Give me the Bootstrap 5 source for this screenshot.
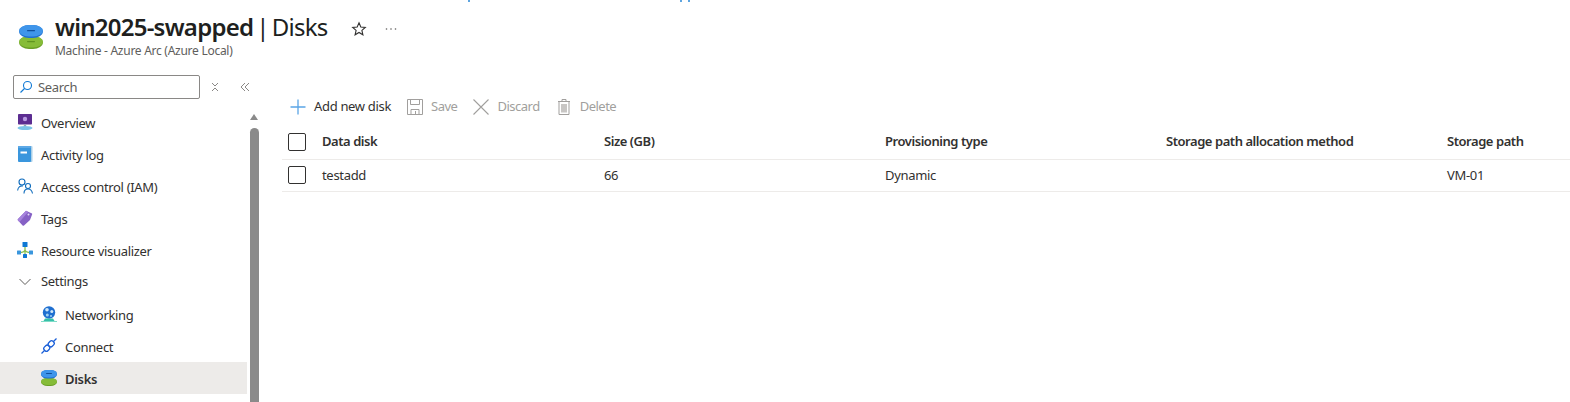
<!DOCTYPE html>
<html lang="en">

<head>
  <meta charset="UTF-8" />
  <meta name="viewport" content="width=device-width, initial-scale=1">
  <title>win2025-swapped | Disks</title>

  <link href="https://cdn.jsdelivr.net/npm/bootstrap@5.3.3/dist/css/bootstrap.min.css" rel="stylesheet" />
  <style>
    html, body { height: 402px; overflow: hidden; }
    body { font-family: "Noto Sans", "Liberation Sans", sans-serif; font-size: 13px; color: #323130; background: #fff; letter-spacing: -.32px; }

    .ticks { height: 2px; padding-left: 468px; }
    .ticks span { width: 2px; height: 2px; background: #5ea5e0; }
    .ticks span:nth-child(2) { margin-left: 210px; }
    .ticks span:nth-child(3) { margin-left: 6px; }

    .blade-head { height: 70px; padding: 9px 0 0 19px; }
    .blade-icon { width: 24px; height: 24px; margin: 14px 12px 0 0; flex: none; }
    .blade-title { font-size: 24px; line-height: 32px; color: #201f1e; letter-spacing: -.75px; word-spacing: -2.5px; }
    .blade-title b { font-weight: 600; }
    .blade-sub { font-size: 12px; line-height: 16px; color: #605e5c; letter-spacing: -.27px; word-spacing: 0; }
    .head-action { margin: 10px 0 0 23px; width: 16px; height: 16px; }
    .head-action + .head-action { margin-left: 16px; }

    .blade-side { width: 247px; flex: none; }
    .search-row { height: 32px; padding-left: 13px; margin-top: 3px; margin-bottom: -1px; }
    .search-box { width: 187px; height: 24px; flex: none; border: 1px solid #8a8886; border-radius: 2px; padding-left: 5px; color: #605e5c; gap: 5px; }
    .search-box span { padding-top: 2px; }
    .side-tool { width: 12px; height: 12px; margin: 6px 0 0 9px; flex: none; }
    .side-tool + .side-tool { margin-left: 18px; }

    .side-item { height: 32px; padding-left: 17px; gap: 8px; color: #323130; }
    .side-item svg { width: 16px; height: 16px; flex: none; }
    .side-item span { padding-top: 4px; }
    .side-item .side-group { padding-top: 0; }
    .side-sub { padding-left: 41px; }
    .side-on { background: #edebe9; font-weight: 600; }

    .side-scroll { width: 13px; margin-top: 42px; flex: none; padding-left: 3px; }
    .scroll-up { width: 0; height: 0; margin-bottom: 8px; border-left: 4.5px solid transparent; border-right: 4.5px solid transparent; border-bottom: 6px solid #8a8a8a; }
    .scroll-thumb { width: 9px; flex: 1; background: #8a8a8a; border-radius: 5px 5px 0 0; }

    .blade-main { padding-left: 22px; min-width: 0; flex: 1; }
    .cmd-bar { height: 36px; padding-left: 8px; margin-top: 17px; }
    .cmd-btn { gap: 8px; margin-right: 16px; color: #a19f9d; letter-spacing: -.5px; }
    .cmd-btn svg { width: 16px; height: 16px; }
    .cmd-live { color: #323130; letter-spacing: -.32px; }

    .disk-table { table-layout: fixed; width: 1288px; margin: 0; color: #323130; }
    .disk-table th, .disk-table td { padding: 0; height: 32px; border-bottom: 1px solid #edebe9; vertical-align: middle; font-size: 13px; color: #323130; background: transparent; }
    .disk-table th { font-weight: 600; height: 34px; letter-spacing: -.45px; }
    .disk-table td:not(:first-child) { padding-top: 1px; }
    .row-check { display: block; width: 18px; height: 18px; border: 1px solid #323130; border-radius: 2px; margin-left: 6px; }
  </style>
</head>

<body>
  <div class="ticks d-flex"><span></span><span></span><span></span></div>

  <div class="blade-head d-flex">
    <svg class="blade-icon" viewBox="0 0 24 24">
      <rect x="0" y="11" width="24" height="13" rx="10" ry="6.500" fill="#6a9f26"/>
      <rect x="0" y="11" width="24" height="11.500" rx="10" ry="5.700" fill="#86bc38"/>
      <rect x="8" y="16" width="8" height="1.200" rx=".6" fill="#5f9420"/>
      <rect x="0" y="0" width="24" height="13" rx="10" ry="6.500" fill="#1f6fd0"/>
      <rect x="0" y="0" width="24" height="11.500" rx="10" ry="5.700" fill="#3f95ea"/>
      <rect x="8" y="5" width="8" height="1.300" rx=".6" fill="#0f4f9c"/>
    </svg>
    <div>
      <div class="blade-title"><b>win2025-swapped</b> | Disks</div>
      <div class="blade-sub">Machine - Azure Arc (Azure Local)</div>
    </div>
    <svg class="head-action" viewBox="0 0 16 16" fill="none" stroke="#323130" stroke-width="1.100"><path d="M8 1.800l1.800 4.200 4.500.4-3.400 3 1 4.400L8 11.500l-3.900 2.300 1-4.400-3.400-3 4.500-.4z"/></svg>
    <svg class="head-action" viewBox="0 0 16 16" fill="#605e5c"><circle cx="3.500" cy="8" r=".8"/><circle cx="8" cy="8" r=".8"/><circle cx="12.500" cy="8" r=".8"/></svg>
  </div>

  <div class="d-flex" style="height: 330px">
    <div class="blade-side">
      <div class="search-row d-flex align-items-start">
        <div class="search-box d-flex align-items-center">
          <svg width="14" height="14" viewBox="0 0 14 14" fill="none" stroke="#0f78d4" stroke-width="1.100"><circle cx="8.500" cy="5.500" r="4"/><path d="M5.500 8.500L1.500 12.500"/></svg>
          <span>Search</span>
        </div>
        <svg class="side-tool" viewBox="0 0 12 12" fill="none" stroke="#8a8886"><path d="M3 2l3 3 3-3M3 10l3-3 3 3"/></svg>
        <svg class="side-tool" viewBox="0 0 12 12" fill="none" stroke="#8a8886"><path d="M6 2L2 6l4 4M10 2L6 6l4 4"/></svg>
      </div>

      <nav>
        <div class="side-item d-flex align-items-center">
          <svg viewBox="0 0 16 16"><rect x="1" y="0" width="14" height="10.500" rx=".8" fill="#5c2d91"/><circle cx="8" cy="5" r="2.200" fill="#b79ae0"/><rect x="6.800" y="10.500" width="2.400" height="2" fill="#9aa7b2"/><ellipse cx="8" cy="14" rx="7.500" ry="2" fill="#7cc4e8"/></svg>
          <span>Overview</span>
        </div>
        <div class="side-item d-flex align-items-center">
          <svg viewBox="0 0 16 16"><rect x="2" y="0" width="13.500" height="16" rx="1" fill="#a9cfe8"/><rect x="1" y="0" width="13" height="16" rx="1" fill="#3a96dd"/><rect x="1" y="0" width="13" height="2" rx="1" fill="#5ea9e6"/><rect x="3.500" y="5.500" width="6.500" height="2" fill="#fff"/></svg>
          <span>Activity log</span>
        </div>
        <div class="side-item d-flex align-items-center">
          <svg viewBox="0 0 16 16" fill="none" stroke="#0f6cbd" stroke-width="1.100"><circle cx="5" cy="4" r="3"/><circle cx="11" cy="8" r="2.500"/><path d="M.6 12.500C1 9.500 3 7.500 6 8M7 15.500c0-3 1.500-4.500 4-4.500s4 1.500 4.500 4.500"/></svg>
          <span>Access control (IAM)</span>
        </div>
        <div class="side-item d-flex align-items-center">
          <svg viewBox="0 0 16 16"><path d="M9 .8l5.500 2.500a1 1 0 0 1 .6 1.300L13 10 7 15.500a1 1 0 0 1-1.400 0L1 10.500a1 1 0 0 1 0-1.400z" fill="#8661c5"/><path d="M9 .8L1 9.100a1 1 0 0 0 0 1.400l1.500 1.500L11 2z" fill="#a582dc"/><circle cx="11.500" cy="4.500" r="1" fill="#e6dbf5"/></svg>
          <span>Tags</span>
        </div>
        <div class="side-item d-flex align-items-center">
          <svg viewBox="0 0 16 16"><path d="M8 4v10M8 7.500C8 10 5 10.500 2 10.500M8 7.500c0 2.500 3 3 6 3" fill="none" stroke="#8cc152" stroke-width="1.300"/><rect x="5.500" y="0" width="5" height="5" rx=".5" fill="#0f78d4"/><rect x="0" y="8.500" width="4" height="4" rx=".5" fill="#3a96dd"/><rect x="6" y="12" width="4" height="4" rx=".5" fill="#0f78d4"/><rect x="12" y="8.500" width="4" height="4" rx=".5" fill="#3a96dd"/></svg>
          <span>Resource visualizer</span>
        </div>
        <div class="side-item d-flex align-items-center">
          <svg viewBox="0 0 16 16" fill="none" stroke="#605e5c" stroke-width="1"><path d="M2.500 5l5.500 5.500L13.500 5"/></svg>
          <span class="side-group">Settings</span>
        </div>
        <div class="side-item side-sub d-flex align-items-center">
          <svg viewBox="0 0 16 16"><circle cx="8" cy="6.500" r="6.200" fill="#1f6fd0"/><circle cx="6" cy="3.800" r="1.800" fill="#cfe6f8"/><circle cx="10.800" cy="5.500" r="1.500" fill="#cfe6f8"/><circle cx="6.300" cy="9" r="1.500" fill="#9fd0f2"/><circle cx="10" cy="10" r="1" fill="#9fd0f2"/><path d="M4 12.500h8l1.500 2.500h-11z" fill="#35c0a8"/><rect x="0" y="15" width="16" height="1" fill="#7fdcc8"/></svg>
          <span>Networking</span>
        </div>
        <div class="side-item side-sub d-flex align-items-center">
          <svg viewBox="0 0 16 16" fill="#fff" stroke="#1a5fd8" stroke-width="1.300"><path d="M.5 15.500l15-15"/><rect x="2.800" y="7.700" width="6" height="5" rx="2" transform="rotate(-45 5.800 10.200)"/><rect x="7.200" y="3.300" width="6" height="5" rx="2" transform="rotate(-45 10.200 5.800)"/></svg>
          <span>Connect</span>
        </div>
        <div class="side-item side-sub side-on d-flex align-items-center">
          <svg viewBox="0 0 16 16"><rect x="0" y="8" width="16" height="8" rx="6.500" ry="4" fill="#6a9f26"/><rect x="0" y="8" width="16" height="7" rx="6.500" ry="3.500" fill="#86bc38"/><rect x="0" y="0" width="16" height="8.500" rx="6.500" ry="4" fill="#1f6fd0"/><rect x="0" y="0" width="16" height="7.500" rx="6.500" ry="3.700" fill="#3f95ea"/><rect x="5" y="3" width="6" height="1" rx=".5" fill="#0f4f9c"/></svg>
          <span>Disks</span>
        </div>
      </nav>
    </div>

    <div class="side-scroll d-flex flex-column">
      <div class="scroll-up"></div>
      <div class="scroll-thumb"></div>
    </div>

    <div class="blade-main">
      <div class="cmd-bar d-flex align-items-center">
        <div class="cmd-btn cmd-live d-flex align-items-center">
          <svg viewBox="1 1 16 16" fill="none" stroke="#5aa5e6" stroke-width="1.300"><path d="M9 1.500v15M1.500 9h15"/></svg>
          <span>Add new disk</span>
        </div>
        <div class="cmd-btn d-flex align-items-center">
          <svg viewBox="1 1 16 16" fill="none" stroke="#a19f9d" stroke-width="1"><path d="M1.500 1.500h15v15h-15zM4.500 1.500v5h9v-5M5 16.500v-5h8v5M9.500 13v3.500"/></svg>
          <span>Save</span>
        </div>
        <div class="cmd-btn d-flex align-items-center">
          <svg viewBox="1 1 16 16" fill="none" stroke="#a19f9d" stroke-width="1.100"><path d="M1.500 1.500l15 15M16.500 1.500l-15 15"/></svg>
          <span>Discard</span>
        </div>
        <div class="cmd-btn d-flex align-items-center">
          <svg viewBox="1 1 16 16" fill="none" stroke="#a19f9d" stroke-width="1"><path d="M3 3.500h12M7 3.500V1.500h4v2M4 3.500v13h10V3.500"/><rect x="6" y="6" width="6" height="8.500" fill="#c8c6c4" stroke="none"/></svg>
          <span>Delete</span>
        </div>
      </div>

      <table class="table disk-table">
        <colgroup>
          <col style="width: 40px"><col style="width: 282px"><col style="width: 281px"><col style="width: 281px"><col style="width: 281px"><col>
        </colgroup>
        <thead>
          <tr>
            <th><span class="row-check"></span></th>
            <th>Data disk</th>
            <th>Size (GB)</th>
            <th>Provisioning type</th>
            <th>Storage path allocation method</th>
            <th>Storage path</th>
          </tr>
        </thead>
        <tbody>
          <tr>
            <td><span class="row-check"></span></td>
            <td>testadd</td>
            <td>66</td>
            <td>Dynamic</td>
            <td></td>
            <td>VM-01</td>
          </tr>
        </tbody>
      </table>
    </div>
  </div>

  <script src="https://cdn.jsdelivr.net/npm/bootstrap@5.3.3/dist/js/bootstrap.bundle.min.js"></script>
</body>

</html>
